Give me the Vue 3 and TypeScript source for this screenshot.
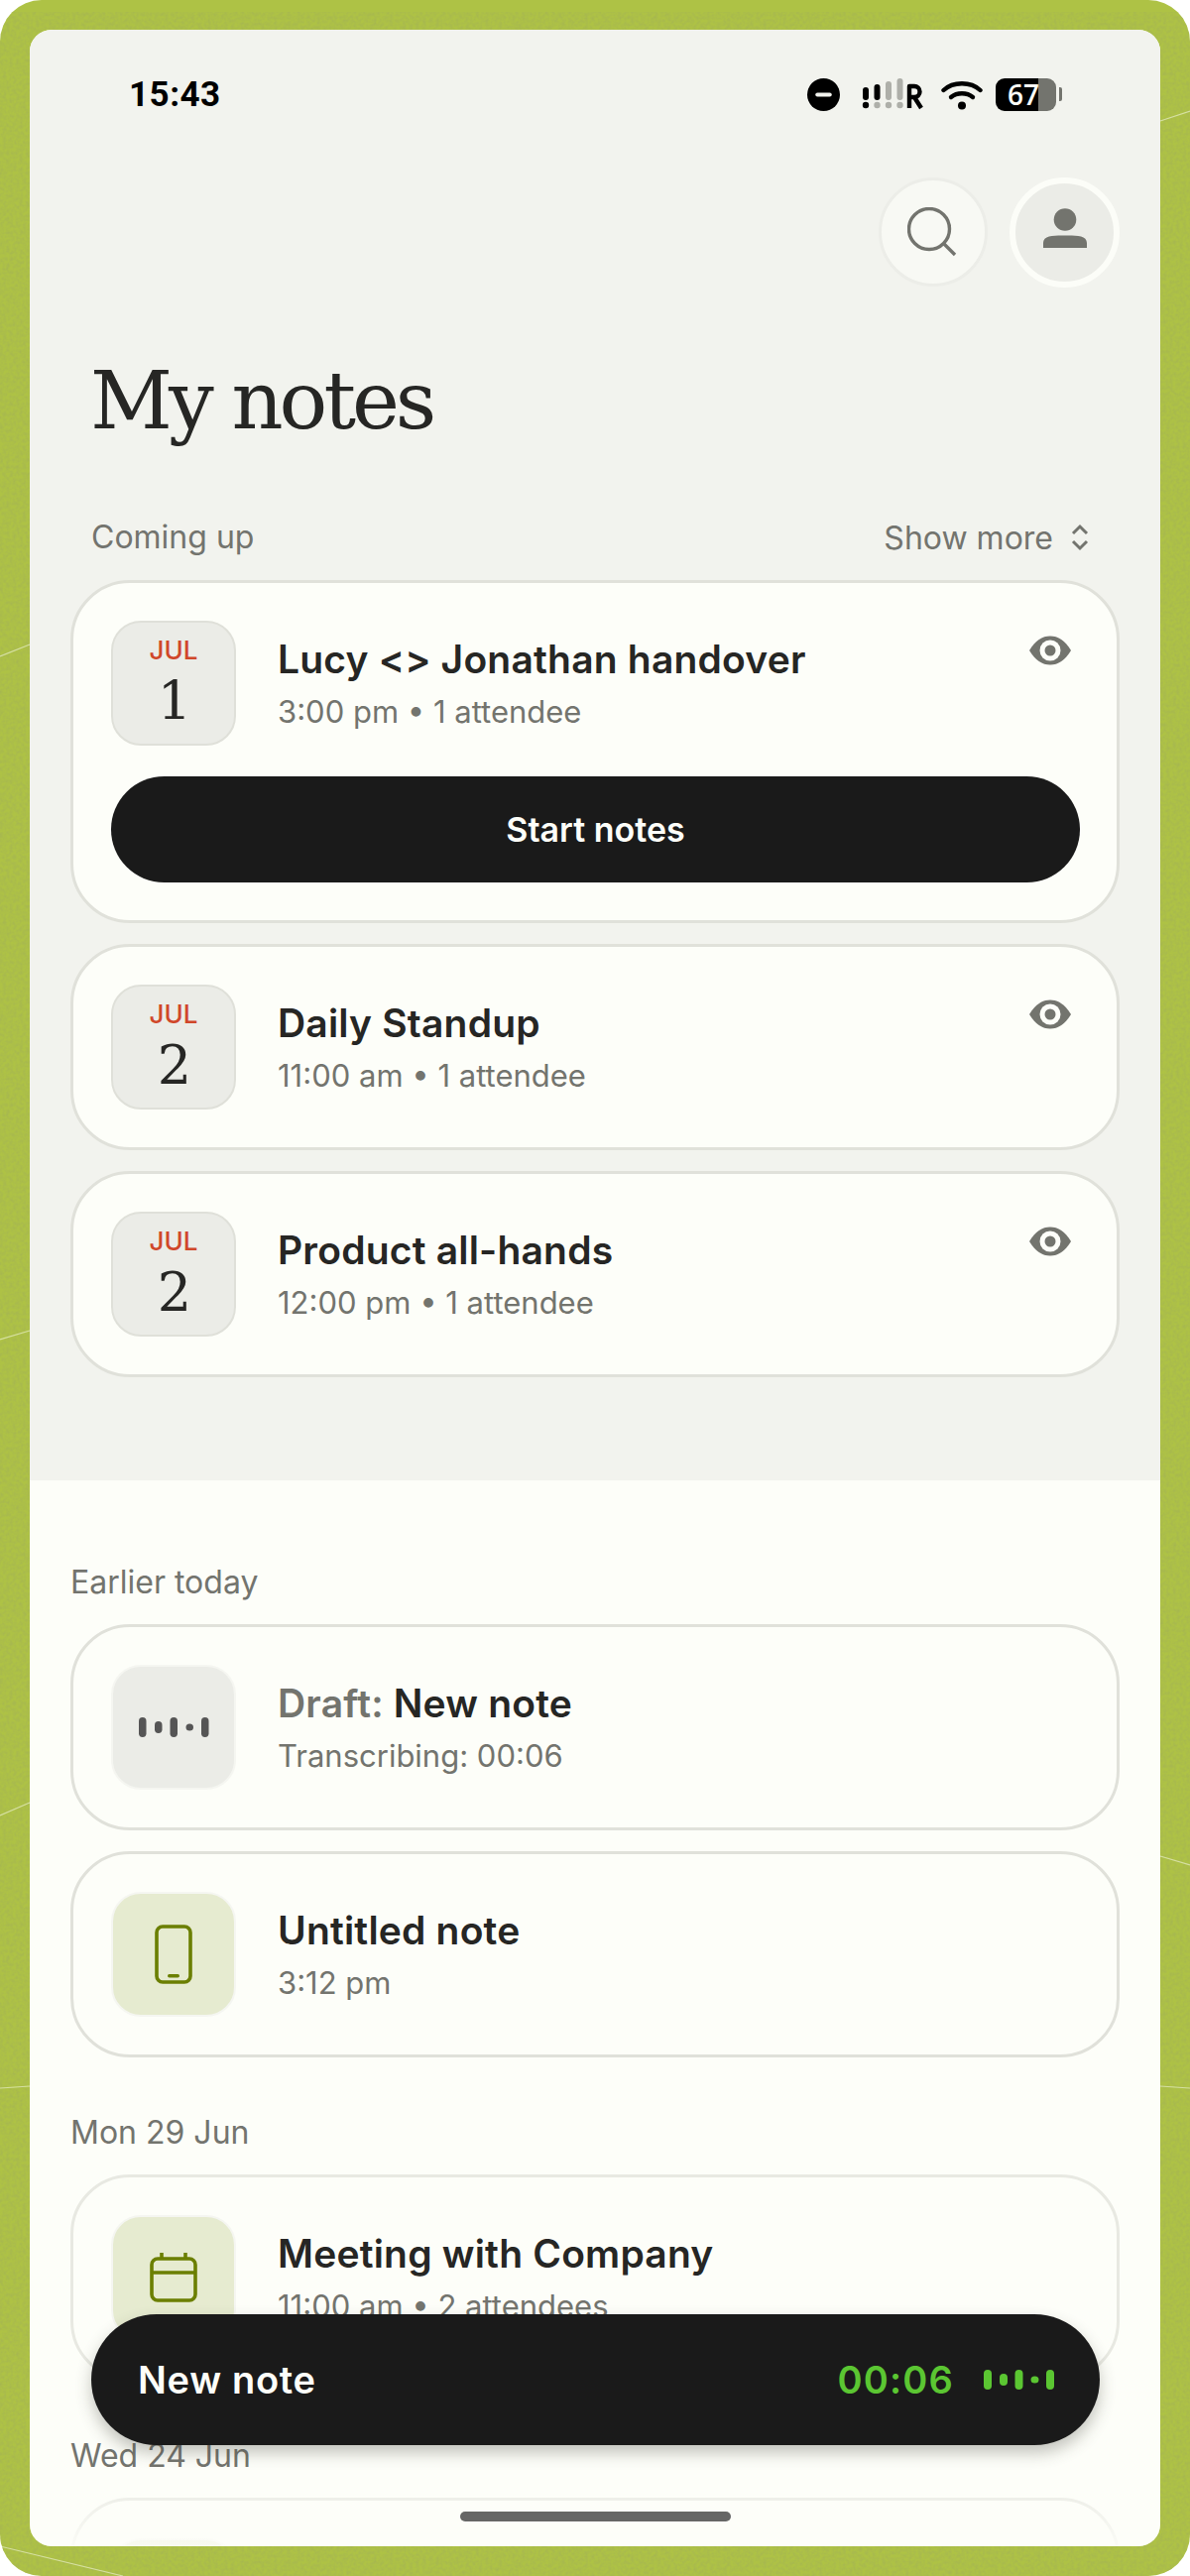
<script setup lang="ts">
interface Upcoming {
  month: string
  day: string
  title: string
  sub: string
  action?: string
}

interface Bar {
  x: number
  h: number
}

const upcoming: Upcoming[] = [
  { month: 'JUL', day: '1', title: 'Lucy <> Jonathan handover', sub: '3:00 pm • 1 attendee', action: 'Start notes' },
  { month: 'JUL', day: '2', title: 'Daily Standup', sub: '11:00 am • 1 attendee' },
  { month: 'JUL', day: '2', title: 'Product all-hands', sub: '12:00 pm • 1 attendee' },
]

// five bars of the recording wave
const wave: Bar[] = [
  { x: 4, h: 20 },
  { x: 20, h: 12 },
  { x: 35.5, h: 20 },
  { x: 51.5, h: 7 },
  { x: 67, h: 20 },
]

// the thin white scratches on the green frame
const scratches: string[] = [
  'M0 662 L30 650',
  'M0 1351 L30 1342',
  'M0 1831 L30 1818',
  'M0 2106 L30 2104',
  'M1170 122 L1200 112',
  'M1170 1872 L1200 1881',
  'M1170 2104 L1200 2106',
  'M0 2568 L124 2598',
]
</script>

<template>
  <div class="page">
    <svg class="frame" width="1200" height="2598" viewBox="0 0 1200 2598">
      <filter id="grain" x="0" y="0" width="100%" height="100%">
        <feTurbulence type="fractalNoise" baseFrequency="0.3" numOctaves="2" seed="4" />
        <feColorMatrix type="matrix" values="0 0 0 0 0.38  0 0 0 0 0.47  0 0 0 0 0.08  1.6 0 0 0 -0.5" />
      </filter>
      <rect x="0" y="12" width="1200" height="2586" filter="url(#grain)" />
      <path v-for="d in scratches" :key="d" :d="d" stroke="#e4ebc0" stroke-width="1.2" stroke-opacity="0.75" fill="none" />
    </svg>

    <div class="screen">
      <section class="top">
        <div class="status">
          <span class="clock">15:43</span>
          <div class="status-icons">
            <svg width="33" height="33" viewBox="0 0 32 32">
              <circle cx="16" cy="16" r="16" fill="#000" />
              <rect x="8" y="14" width="16" height="4" rx="2" fill="#f2f3ee" />
            </svg>
            <svg class="signal" width="62" height="32" viewBox="0 0 62 32">
              <rect x="1" y="9" width="6" height="13" rx="3" fill="#000" />
              <circle cx="4" cy="27" r="3.2" fill="#000" />
              <rect x="12.5" y="6" width="6" height="16" rx="3" fill="#000" />
              <circle cx="15.5" cy="27" r="3.2" fill="#aeafa9" />
              <rect x="24" y="3" width="6" height="19" rx="3" fill="#aeafa9" />
              <circle cx="27" cy="27" r="3.2" fill="#aeafa9" />
              <rect x="35.5" y="0" width="6" height="22" rx="3" fill="#aeafa9" />
              <circle cx="38.5" cy="27" r="3.2" fill="#aeafa9" />
              <path d="M48 30 V8 H53 A5.5 5.5 0 0 1 53 19 H48 M53 19 L60 30" fill="none" stroke="#000" stroke-width="4.4" stroke-linejoin="round" />
            </svg>
            <svg class="wifi" width="42" height="31" viewBox="0 0 42 31">
              <path d="M2.5 11 C12 2 30 2 39.5 11" fill="none" stroke="#000" stroke-width="4.4" stroke-linecap="round" />
              <path d="M10 18 C16 13 26 13 32 18" fill="none" stroke="#000" stroke-width="4.4" stroke-linecap="round" />
              <circle cx="21" cy="26.5" r="4" fill="#000" />
            </svg>
            <div class="battery">
              <div class="battery-body">
                <span class="battery-level">67</span>
              </div>
              <i class="battery-nub"></i>
            </div>
          </div>
        </div>

        <div class="actions">
          <button class="round search">
            <svg width="50" height="50" viewBox="0 0 50 50">
              <circle cx="22" cy="22" r="20.5" fill="none" stroke="#73746e" stroke-width="3.4" />
              <path d="M36.5 36.5 L48 48" stroke="#73746e" stroke-width="3.4" fill="none" />
            </svg>
          </button>
          <button class="round avatar">
            <svg width="46" height="46" viewBox="0 0 46 46">
              <circle cx="23" cy="11.5" r="11.3" fill="#73746e" />
              <path d="M1 40 V35 C1 27 13 27.5 23 27.5 C33 27.5 45 27 45 35 V40 Z" fill="#73746e" />
            </svg>
          </button>
        </div>

        <h1 class="heading">My notes</h1>

        <div class="section-row">
          <span class="label">Coming up</span>
          <span class="more">
            Show more
            <svg width="20" height="28" viewBox="0 0 20 28">
              <path d="M3 10 L10 3 L17 10 M3 18 L10 25 L17 18" fill="none" stroke="#73746e" stroke-width="3" />
            </svg>
          </span>
        </div>

        <div class="list">
          <article v-for="item in upcoming" :key="item.title + item.sub" class="card">
            <div class="card-row">
              <div class="date">
                <span class="month">{{ item.month }}</span>
                <span class="day">{{ item.day }}</span>
              </div>
              <div class="text">
                <div class="title">{{ item.title }}</div>
                <div class="sub">{{ item.sub }}</div>
              </div>
              <svg class="eye" width="42" height="30" viewBox="0 0 42 30">
                <path d="M0 15 C6 5 13 0.5 21 0.5 C29 0.5 36 5 42 15 C36 25 29 29.5 21 29.5 C13 29.5 6 25 0 15 Z" fill="#73746e" />
                <circle cx="21" cy="15" r="10.5" fill="#fdfef9" />
                <circle cx="21" cy="15" r="5.5" fill="#73746e" />
              </svg>
            </div>
            <button v-if="item.action" class="start">{{ item.action }}</button>
          </article>
        </div>
      </section>

      <section class="bottom">
        <div class="label group">Earlier today</div>
        <div class="list">
          <article class="card">
            <div class="card-row">
              <div class="tile">
                <svg width="71" height="20" viewBox="0 0 71 20">
                  <rect
                    v-for="b in wave"
                    :key="b.x"
                    :x="b.x - 4"
                    :y="10 - b.h / 2"
                    width="7.5"
                    :height="b.h"
                    rx="3.7"
                    fill="#555"
                  />
                </svg>
              </div>
              <div class="text">
                <div class="title"><span class="draft">Draft:</span> New note</div>
                <div class="sub">Transcribing: 00:06</div>
              </div>
            </div>
          </article>
          <article class="card">
            <div class="card-row">
              <div class="tile green">
                <svg width="38" height="60" viewBox="0 0 38 60">
                  <rect x="2" y="2" width="34" height="56" rx="6" fill="none" stroke="#6b7f00" stroke-width="3.6" />
                  <rect x="13" y="50" width="12" height="3.4" rx="1.7" fill="#6b7f00" />
                </svg>
              </div>
              <div class="text">
                <div class="title">Untitled note</div>
                <div class="sub">3:12 pm</div>
              </div>
            </div>
          </article>
        </div>

        <div class="label group second">Mon 29 Jun</div>
        <div class="list">
          <article class="card faint">
            <div class="card-row">
              <div class="tile green">
                <svg width="48" height="50" viewBox="0 0 48 50">
                  <rect x="2" y="6" width="44" height="42" rx="6" fill="none" stroke="#6b7f00" stroke-width="3.6" />
                  <path d="M2 20 H46 M12 0 V7 M36 0 V7" fill="none" stroke="#6b7f00" stroke-width="3.6" />
                </svg>
              </div>
              <div class="text">
                <div class="title">Meeting with Company</div>
                <div class="sub">11:00 am • 2 attendees</div>
              </div>
            </div>
          </article>
        </div>

        <div class="label group third">Wed 24 Jun</div>
        <div class="list">
          <article class="card fainter">
            <div class="card-row">
              <div class="tile green"></div>
            </div>
          </article>
        </div>
      </section>

      <div class="fade"></div>

      <div class="recorder">
        <span class="recorder-name">New note</span>
        <span class="recorder-time">00:06</span>
        <svg width="71" height="20" viewBox="0 0 71 20">
          <rect
            v-for="b in wave"
            :key="b.x"
            :x="b.x - 4"
            :y="10 - b.h / 2"
            width="8"
            :height="b.h"
            rx="4"
            fill="#5bc632"
          />
        </svg>
      </div>

      <div class="home-bar"></div>
    </div>
  </div>
</template>

<style scoped>
.page {
  position: relative;
  width: 1200px;
  height: 2598px;
  box-sizing: border-box;
  padding: 30px;
  background: #aec245;
  border-radius: 42px;
  overflow: hidden;
  font-family: Inter, "Liberation Sans", sans-serif;
}
.frame {
  position: absolute;
  top: 0;
  left: 0;
}
.screen {
  position: relative;
  height: 2538px;
  border-radius: 22px;
  overflow: hidden;
  background: #fdfef9;
}
.top {
  height: 1463px;
  box-sizing: border-box;
  padding-top: 48px;
  background: #f2f3ee;
}
.status {
  height: 34px;
  display: flex;
  align-items: center;
  justify-content: space-between;
  padding: 0 99px 0 100px;
}
.clock {
  font-family: Roboto, sans-serif;
  font-size: 35px;
  font-weight: 700;
  color: #000;
  letter-spacing: 0.5px;
}
.status-icons {
  display: flex;
  align-items: center;
}
.signal {
  margin-left: 22px;
}
.wifi {
  margin-left: 18px;
}
.battery {
  display: flex;
  align-items: center;
  margin-left: 13px;
}
.battery-body {
  width: 61px;
  height: 33px;
  border-radius: 9px;
  background: linear-gradient(90deg, #000 43px, #73746e 43px);
  display: flex;
  align-items: center;
  box-sizing: border-box;
  padding-left: 12px;
}
.battery-level {
  font-size: 28px;
  font-weight: 600;
  color: #fdfef9;
  line-height: 33px;
  font-family: "Open Sans", sans-serif;
}
.battery-nub {
  width: 3px;
  height: 14px;
  margin-left: 3px;
  border-radius: 0 2px 2px 0;
  background: #73746e;
}
.actions {
  display: flex;
  justify-content: flex-end;
  gap: 22px;
  padding-right: 41px;
  margin-top: 67px;
}
.round {
  padding: 0;
  box-sizing: border-box;
  border-radius: 50%;
  display: flex;
  align-items: center;
  justify-content: center;
}
.search {
  width: 110px;
  height: 110px;
  background: #f8f9f4;
  border: 3px solid #ecede8;
}
.avatar {
  width: 111px;
  height: 111px;
  background: #ebece7;
  border: 6px solid #fcfdf8;
}
.avatar svg {
  margin-bottom: 4px;
}
.search svg {
  margin: 0 0 0 -3px;
}
.heading {
  margin: 61px 0 0 61px;
  font-family: "DejaVu Serif", serif;
  font-size: 81px;
  line-height: 106px;
  font-weight: 400;
  letter-spacing: -4px;
  color: #262624;
}
.section-row {
  display: flex;
  justify-content: space-between;
  align-items: center;
  padding: 0 71px 0 62px;
  margin-top: 65px;
  height: 40px;
}
.label {
  font-size: 32px;
  line-height: 40px;
  color: #73746e;
}
.more {
  display: flex;
  align-items: center;
  gap: 17px;
  font-size: 32px;
  color: #73746e;
}
.list {
  display: flex;
  flex-direction: column;
  gap: 21px;
  padding: 0 41px;
}
.top .list {
  margin-top: 23px;
}
.card {
  box-sizing: border-box;
  padding: 38px 37px 38px 38px;
  border: 3px solid #e0e1da;
  border-radius: 60px;
  background: #fdfef9;
}
.faint {
  border-color: #e8e9e2;
}
.fainter {
  border-color: #eeefe9;
}
.card-row {
  display: flex;
  align-items: center;
  position: relative;
}
.date,
.tile {
  flex: none;
  width: 126px;
  height: 126px;
  box-sizing: border-box;
  border-radius: 30px;
  background: #ebece7;
  display: flex;
  align-items: center;
  justify-content: center;
}
.date {
  flex-direction: column;
  gap: 8px;
  border: 2px solid #dfe0d9;
}
.tile {
  border: 2px solid #f5f6f1;
}
.tile.green {
  background: #e6ebd0;
}
.month {
  font-size: 26px;
  line-height: 30px;
  font-weight: 500;
  color: #d0472a;
}
.day {
  font-family: "DejaVu Serif", serif;
  font-size: 54px;
  line-height: 58px;
  letter-spacing: -2px;
  color: #262624;
}
.text {
  margin-left: 42px;
}
.title {
  font-size: 39px;
  line-height: 48px;
  font-weight: 600;
  letter-spacing: 0.2px;
  color: #262624;
}
.draft {
  color: #73746e;
}
.sub {
  margin-top: 9px;
  font-size: 31px;
  line-height: 40px;
  color: #73746e;
}
.eye {
  position: absolute;
  top: 15px;
  right: 9px;
}
.start {
  display: block;
  width: 100%;
  height: 107px;
  margin-top: 31px;
  border: 0;
  border-radius: 54px;
  background: #1a1a1a;
  color: #fdfef9;
  font-family: inherit;
  font-size: 34px;
  font-weight: 600;
}
.bottom {
  padding-top: 83px;
}
.group {
  padding-left: 41px;
  margin-bottom: 22px;
  height: 40px;
}
.second {
  margin-top: 56px;
}
.third {
  margin-top: 56px;
}
.fade {
  position: absolute;
  left: 0;
  right: 0;
  bottom: 0;
  height: 50px;
  background: linear-gradient(180deg, rgba(253, 254, 249, 0), rgba(253, 254, 249, 0.8));
}
.recorder {
  position: absolute;
  left: 62px;
  bottom: 102px;
  width: 1017px;
  height: 132px;
  box-sizing: border-box;
  padding: 0 46px 0 47px;
  border-radius: 66px;
  background: #1a1a1a;
  box-shadow: 0 8px 16px rgba(60, 60, 50, 0.3);
  display: flex;
  align-items: center;
}
.recorder-name {
  flex: 1;
  font-size: 38px;
  font-weight: 600;
  letter-spacing: 0.7px;
  color: #fdfef9;
}
.recorder-time {
  margin-right: 30px;
  font-size: 38px;
  font-weight: 600;
  letter-spacing: 1.2px;
  color: #5bc632;
}
.home-bar {
  position: absolute;
  left: 434px;
  bottom: 25px;
  width: 273px;
  height: 10px;
  border-radius: 5px;
  background: #666;
}
</style>

<style>
html,
body {
  background: #fff;
}
</style>
